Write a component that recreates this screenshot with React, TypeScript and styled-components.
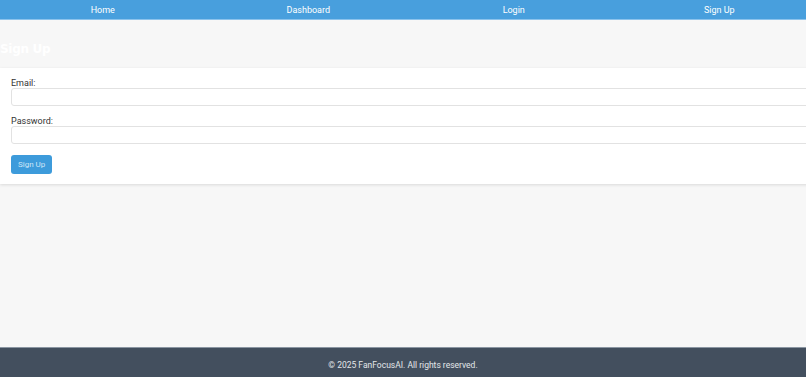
import { createGlobalStyle, styled } from "styled-components"

const GlobalStyle = createGlobalStyle`
  html, body {
    margin: 0;
    padding: 0;
    background: #f7f7f7;
    font-family: Roboto, "Liberation Sans", Arial, sans-serif;
    overflow-x: hidden;
  }
  * { box-sizing: border-box; }
`

const Page = styled.div`
  min-height: 100vh;
  display: flex;
  flex-direction: column;
`

const Nav = styled.nav`
  display: flex;
  width: calc(100% + 16px);
  height: 20px;
  background: #489fdd;
  border-bottom: 1px solid #8cc3ec;
`

const NavLink = styled.a`
  flex: 1;
  display: flex;
  align-items: center;
  justify-content: center;
  color: #ffffff;
  font-size: 9px;
  text-decoration: none;
`

const Main = styled.main`
  flex: 1;
`

const Title = styled.h2`
  margin: 0;
  padding: 21px 0 11px;
  color: #ffffff;
  font-family: "DejaVu Sans", sans-serif;
  font-size: 12px;
  font-weight: bold;
  line-height: 16px;
  letter-spacing: -0.3px;
`

const Card = styled.form`
  width: calc(100% + 20px);
  background: #ffffff;
  padding: 10px 11px 10px;
  box-shadow: 0 1px 3px rgba(0, 0, 0, 0.12);
`

const Label = styled.label`
  display: block;
  color: #333333;
  font-size: 9px;
  line-height: 10px;
`

const Input = styled.input`
  display: block;
  width: 100%;
  height: 18px;
  margin: 0 0 ${(p: { $last?: boolean }) => (p.$last ? "11px" : "10px")};
  border: 1px solid #e2e2e2;
  border-radius: 3px;
  background: #ffffff;
`

const Button = styled.button`
  display: block;
  height: 19px;
  padding: 0 7px;
  border: none;
  border-radius: 3px;
  background: #3d9bdb;
  color: #cfe6f7;
  font-family: Roboto, "Liberation Sans", Arial, sans-serif;
  font-size: 8px;
`

const Footer = styled.footer`
  height: 30px;
  padding-top: 5px;
  background: #434f5e;
  border-top: 1px solid #8b96a2;
  display: flex;
  align-items: center;
  justify-content: center;
  color: #e4e7ea;
  font-size: 8.5px;
`

const App = () => {
  return (
    <>
      <GlobalStyle />
      <Page>
        <Nav>
          {["Home", "Dashboard", "Login", "Sign Up"].map((item) => (
            <NavLink key={item} href="#">
              {item}
            </NavLink>
          ))}
        </Nav>
        <Main>
          <Title>Sign Up</Title>
          <Card onSubmit={(e) => e.preventDefault()}>
            <Label>Email:</Label>
            <Input type="email" />
            <Label>Password:</Label>
            <Input type="password" $last />
            <Button type="submit">Sign Up</Button>
          </Card>
        </Main>
        <Footer>© 2025 FanFocusAI. All rights reserved.</Footer>
      </Page>
    </>
  )
}

export default App
